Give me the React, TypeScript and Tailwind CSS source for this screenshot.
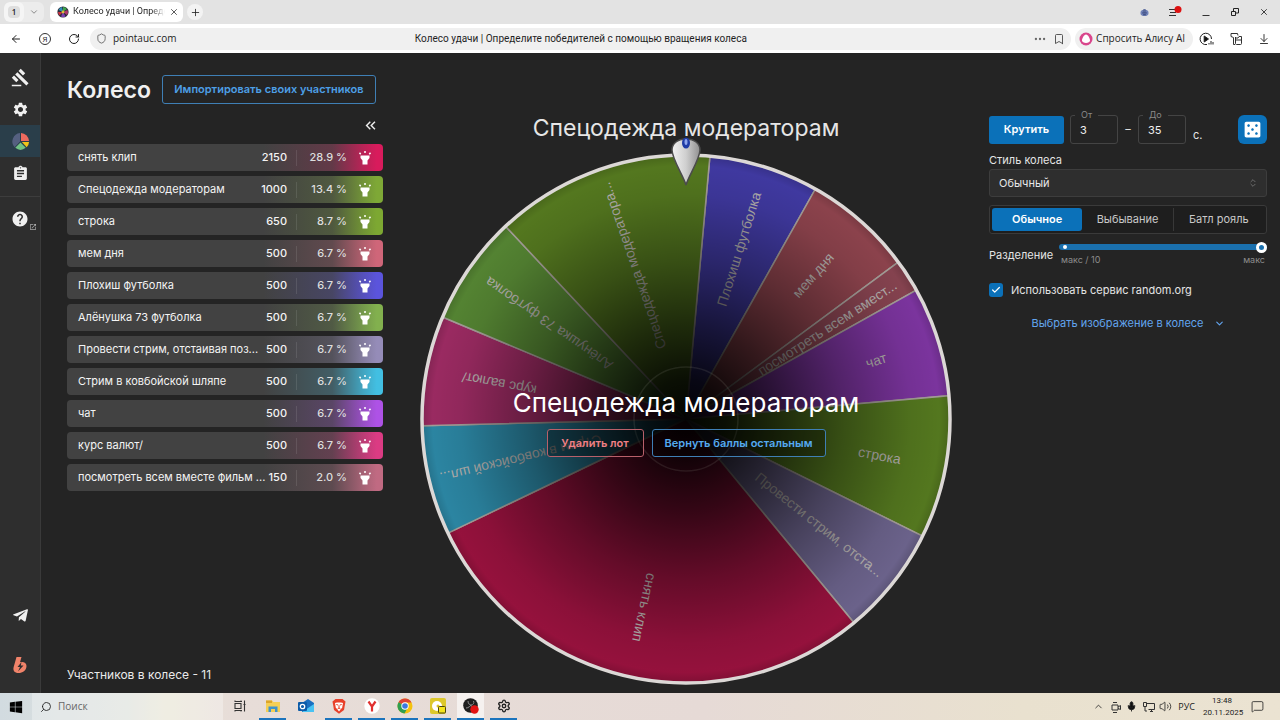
import React, { useState } from "react";
import {
  MdAssignment,
  MdCasino,
  MdGavel,
  MdHelp,
  MdKeyboardDoubleArrowLeft,
  MdOpenInNew,
  MdSettings,
} from "react-icons/md";
import { FaTelegramPlane, FaWindows } from "react-icons/fa";
import {
  ArrowDownToLine,
  ArrowLeft,
  Bookmark,
  Check,
  ChevronDown,
  ChevronsUpDown,
  ChevronUp,
  Ellipsis,
  MessageSquare,
  Mic,
  Plus,
  RotateCw,
  Search,
  Settings,
  Shield,
  Volume2,
  X,
} from "lucide-react";

type Lot = { name: string; points: number; share: string; color: string };

const lots: Lot[] = [
  { name: "снять клип", points: 2150, share: "28.9", color: "#d81b5c" },
  { name: "Спецодежда модераторам", points: 1000, share: "13.4", color: "#7ea836" },
  { name: "строка", points: 650, share: "8.7", color: "#7da832" },
  { name: "мем дня", points: 500, share: "6.7", color: "#cf6679" },
  { name: "Плохиш футболка", points: 500, share: "6.7", color: "#5b54dc" },
  { name: "Алёнушка 73 футболка", points: 500, share: "6.7", color: "#82b04e" },
  { name: "Провести стрим, отстаивая поз...", points: 500, share: "6.7", color: "#958cb8" },
  { name: "Стрим в ковбойской шляпе", points: 500, share: "6.7", color: "#42bfe2" },
  { name: "чат", points: 500, share: "6.7", color: "#ae52e6" },
  { name: "курс валют/", points: 500, share: "6.7", color: "#db3b83" },
  { name: "посмотреть всем вместе фильм ...", points: 150, share: "2.0", color: "#c06a82" },
];

type Slice = { label: string; value: number; color: string; radius: number };

const slices: Slice[] = [
  { label: "Плохиш футболка", value: 500, color: "#423ba6", radius: 178 },
  { label: "мем дня", value: 500, color: "#91454f", radius: 192 },
  { label: "посмотреть всем вмест...", value: 150, color: "#8a4552", radius: 168 },
  { label: "чат", value: 500, color: "#8036a4", radius: 199 },
  { label: "строка", value: 650, color: "#577c20", radius: 197 },
  { label: "Провести стрим, отста...", value: 500, color: "#6f6690", radius: 170 },
  { label: "снять клип", value: 2150, color: "#9b123f", radius: 193 },
  { label: "Стрим в ковбойской шл...", value: 500, color: "#2d8aa8", radius: 170 },
  { label: "курс валют/", value: 500, color: "#a02c65", radius: 190 },
  { label: "Алёнушка 73 футболка", value: 500, color: "#578834", radius: 167 },
  { label: "Спецодежда модератора...", value: 1000, color: "#577c20", radius: 162 },
];

const RADIUS = 264;
const START_ANGLE = 5.2;

function pointAt(angle: number, r: number) {
  const a = (angle * Math.PI) / 180;
  return { x: Math.sin(a) * r, y: -Math.cos(a) * r };
}

function Wheel() {
  const total = slices.reduce((sum, s) => sum + s.value, 0);
  let angle = START_ANGLE;
  const arcs = slices.map((s) => {
    const from = angle;
    angle += (s.value / total) * 360;
    return { ...s, from, to: angle, mid: (from + angle) / 2 };
  });
  return (
    <svg viewBox="-266 -266 532 532" className="block h-auto w-full" role="img" aria-label="Колесо">
      <defs>
        <radialGradient id="shade">
          <stop offset="0" stopColor="#000" stopOpacity="0.97" />
          <stop offset="0.15" stopColor="#000" stopOpacity="0.88" />
          <stop offset="0.35" stopColor="#000" stopOpacity="0.66" />
          <stop offset="0.6" stopColor="#000" stopOpacity="0.36" />
          <stop offset="0.85" stopColor="#000" stopOpacity="0.1" />
          <stop offset="0.96" stopColor="#000" stopOpacity="0.04" />
          <stop offset="1" stopColor="#000" stopOpacity="0.18" />
        </radialGradient>
      </defs>
      {arcs.map((s) => {
        const a = pointAt(s.from, RADIUS);
        const b = pointAt(s.to, RADIUS);
        const large = s.to - s.from > 180 ? 1 : 0;
        return (
          <path
            key={s.label}
            d={`M0 0L${a.x} ${a.y}A${RADIUS} ${RADIUS} 0 ${large} 1 ${b.x} ${b.y}Z`}
            fill={s.color}
            stroke="#a9a29c"
            strokeWidth="1.5"
          />
        );
      })}
      {arcs.map((s) => {
        const p = pointAt(s.mid, s.radius);
        return (
          <text
            key={s.label}
            transform={`translate(${p.x} ${p.y}) rotate(${s.mid - 90})`}
            textAnchor="middle"
            dominantBaseline="central"
            fontSize="14"
            fill="#b9b5b2"
            className="font-['Liberation_Sans',sans-serif]"
          >
            {s.label}
          </text>
        );
      })}
      <circle r={RADIUS} fill="url(#shade)" />
      <circle r="52" fill="none" stroke="#9a9a90" strokeOpacity="0.15" strokeWidth="1.5" />
      <circle r="264" fill="none" stroke="#dcd8d6" strokeWidth="3.5" />
    </svg>
  );
}

function Pointer() {
  return (
    <svg viewBox="0 0 34 52" className="absolute -top-[17px] left-1/2 h-[52px] w-[34px] -translate-x-1/2" aria-hidden="true">
      <defs>
        <linearGradient id="metal" x1="0" x2="1">
          <stop offset="0" stopColor="#f2f2f2" />
          <stop offset="0.5" stopColor="#cfcfcf" />
          <stop offset="1" stopColor="#909090" />
        </linearGradient>
      </defs>
      <path
        d="M17 49C15 41 3 23 3 14C3 8 8 3 17 3S31 8 31 14C31 23 19 41 17 49Z"
        fill="url(#metal)"
        stroke="#4b4b4b"
        strokeWidth="1.5"
      />
      <ellipse cx="17" cy="7" rx="4" ry="5.5" fill="#1f3ca6" />
      <ellipse cx="17" cy="6" rx="1.5" ry="3" fill="#8fa6ee" />
    </svg>
  );
}

function BrowserChrome() {
  return (
    <header className="font-['Open_Sans',sans-serif] text-[10px] text-[#1f1f1f]">
      <div className="flex h-6 items-center bg-[#e3e3e3] pl-1 pr-[11px]">
        <div className="flex h-5 w-10 items-center overflow-hidden rounded-md bg-[#ececec]">
          <span className="flex h-5 w-5 items-center justify-center rounded-md bg-[#f5f5f5]">
            <span className="flex h-3 w-3 items-center justify-center rounded bg-[#dedede] text-[8px] font-semibold">1</span>
          </span>
          <button aria-label="Список вкладок" className="flex h-5 w-5 items-center justify-center text-[#777]">
            <ChevronDown size={10} />
          </button>
        </div>
        <div className="ml-1.5 flex h-5 w-[133px] items-center rounded-md bg-white pl-[7px] pr-1">
          <svg viewBox="0 0 12 12" className="h-3 w-3 shrink-0" aria-hidden="true">
            <circle cx="6" cy="6" r="5.6" fill="#2b2b3a" />
            <path d="M6 6V1A5 5 0 0 1 10 3Z" fill="#3fa54b" />
            <path d="M6 6L10.5 4A5 5 0 0 1 10 9Z" fill="#b0366b" />
            <path d="M6 6L8.5 10.4A5 5 0 0 1 4 10.5Z" fill="#7c3fb5" />
            <path d="M6 6L2.4 9.4A5 5 0 0 1 1 6Z" fill="#c8323f" />
            <path d="M6 6L1.6 4A5 5 0 0 1 5 1Z" fill="#2f8fb8" />
            <circle cx="6" cy="6" r="1.4" fill="#d8c43a" />
          </svg>
          <span className="ml-1 w-[92px] overflow-hidden whitespace-nowrap font-['Roboto',sans-serif] text-[9px] [mask-image:linear-gradient(to_right,black_85%,transparent)]">
            Колесо удачи | Опреде
          </span>
          <button aria-label="Закрыть вкладку" className="ml-auto">
            <X size={10} strokeWidth={1.75} />
          </button>
        </div>
        <button aria-label="Новая вкладка" className="ml-1 flex h-4 w-4 items-center justify-center rounded-full bg-[#f3f3f3]">
          <Plus size={11} strokeWidth={1.75} />
        </button>
        <div className="ml-auto flex items-center gap-[19px]">
          <svg viewBox="0 0 10 10" className="h-[9px] w-[9px]" aria-hidden="true">
            <ellipse cx="5" cy="5.5" rx="4.5" ry="3.5" fill="#7183b8" />
            <circle cx="5" cy="3" r="2" fill="#5a6a9c" />
            <path d="M2.5 5.5h5M3.5 7.5h3" stroke="#2e3c70" />
          </svg>
          <button aria-label="Меню" className="h-3 w-3.5">
            <svg viewBox="0 0 14 12" className="h-3 w-3.5">
              <path d="M1 3.5h7M2 6.5h6M1 9.5h7" stroke="#333" />
              <circle cx="10" cy="3.5" r="3.5" fill="#dd1111" />
            </svg>
          </button>
          <button aria-label="Свернуть" className="h-2.5 w-2.5">
            <svg viewBox="0 0 10 10" className="h-2.5 w-2.5">
              <path d="M1.5 8.5h7" stroke="#333" />
            </svg>
          </button>
          <button aria-label="Развернуть" className="h-2.5 w-2.5">
            <svg viewBox="0 0 10 10" className="h-2.5 w-2.5" fill="none" stroke="#222">
              <path d="M1.5 4.5h4v4h-4zM3.5 4V1.5h5v4.500H6" />
            </svg>
          </button>
          <button aria-label="Закрыть" className="h-2.5 w-2.5">
            <X size={10} strokeWidth={2} />
          </button>
        </div>
      </div>
      <div className="flex h-[29px] items-center bg-white px-2.5">
        <button aria-label="Назад">
          <ArrowLeft size={12} strokeWidth={2} />
        </button>
        <button aria-label="Яндекс" className="ml-[17px] flex h-3 w-3 items-center justify-center rounded-full border border-[#333] text-[8px] leading-none">
          Я
        </button>
        <button aria-label="Обновить" className="ml-[17px]">
          <RotateCw size={12} strokeWidth={2} />
        </button>
        <div className="ml-2.5 flex h-[22px] min-w-0 flex-1 items-center rounded-full bg-[#f0f0f0] px-1.5">
          <Shield size={11} strokeWidth={1.75} className="text-[#555]" />
          <span className="ml-1.5">pointauc.com</span>
          <span className="min-w-0 flex-1 truncate pr-12 text-center font-['Roboto',sans-serif]">
            Колесо удачи | Определите победителей с помощью вращения колеса
          </span>
          <Ellipsis size={14} className="text-[#666]" />
          <Bookmark size={12} strokeWidth={1.75} className="ml-1.5 text-[#444]" />
        </div>
        <button className="ml-1 flex h-[22px] items-center gap-[3px] rounded-full bg-[#f0f0f0] pl-1 pr-2">
          <svg viewBox="0 0 14 14" className="h-3.5 w-3.5" aria-hidden="true">
            <circle cx="7" cy="7" r="6.500" fill="#d9468c" />
            <path d="M7 2.500C9 2.500 11 6.500 11 8.300C11 10.300 9 11 7 11S3 10.300 3 8.300C3 6.500 5 2.500 7 2.500Z" fill="#fff" />
          </svg>
          Спросить Алису AI
        </button>
        <div className="ml-1.5 flex items-center gap-[15px]">
          <svg viewBox="0 0 15 14" className="h-3.5 w-[15px]" fill="none" stroke="#222" aria-hidden="true">
            <path d="M8 12.500A5.700 5.700 0 1 1 12.500 7" />
            <path d="M5.200 4v6L9.500 7Z" fill="#111" />
            <path d="M10 12.500V11M12 12.500V9M14 12.500V10" />
          </svg>
          <svg viewBox="0 0 14 14" className="h-3.5 w-3.5" fill="none" stroke="#333" aria-hidden="true">
            <path d="M4.500 5.500L2 4.500V1.500H8.500L9 3.500M4.500 5.500V12.500H6" />
            <path d="M6.500 5V11.500Q6.500 12.500 7.500 12.500H11.500Q12.500 12.500 12.500 11.500V4.500H10L9 6H6.500M6.500 8H12.500" />
          </svg>
          <ArrowDownToLine size={12} strokeWidth={1.75} />
        </div>
      </div>
    </header>
  );
}

function Sidebar() {
  const item = "flex h-8 items-center justify-center";
  return (
    <nav className="flex w-[41px] shrink-0 flex-col border-r border-[#3a3a3a] bg-[#2e2e2e] pt-2 text-[#f0f0f0]">
      <a href="#auction" aria-label="Аукцион" className={item}>
        <MdGavel size={19} />
      </a>
      <a href="#settings" aria-label="Настройки" className={item}>
        <MdSettings size={17} />
      </a>
      <a href="#wheel" aria-label="Колесо" aria-current="page" className="flex h-8 items-center justify-center bg-[#2a3e4a]">
        <svg viewBox="0 0 20 20" className="h-[19px] w-[19px]">
          <path d="M10.500 9.500V1A8.800 8.800 0 0 1 19 9.500Z" fill="#ed6a5e" />
          <path d="M11.500 10.500H19A8.800 8.800 0 0 1 16.500 16Z" fill="#f0c419" />
          <path d="M10 11L15.500 16.700A9 9 0 0 1 4.500 16.700Z" fill="#71c285" />
          <path d="M9.500 1V10L3.800 16A9 9 0 0 1 9.500 1Z" fill="#556080" />
        </svg>
      </a>
      <a href="#history" aria-label="История" className={item}>
        <MdAssignment size={17} />
      </a>
      <div className="mb-1.5 mt-[7px] border-t border-[#3d3d3d]" />
      <a href="#help" aria-label="Помощь" className="relative flex h-8 items-center justify-center">
        <MdHelp size={18} />
        <MdOpenInNew size={8} className="absolute bottom-1 right-[3px] text-[#aaa]" />
      </a>
      <div className="mt-auto flex flex-col gap-[18px] pb-3">
        <a href="#telegram" aria-label="Telegram" className={item}>
          <FaTelegramPlane size={17} />
        </a>
        <a href="#boosty" aria-label="Boosty" className={item}>
          <svg viewBox="0 0 16 18" className="h-[18px] w-4">
            <path
              d="M4.500 1H9.500L8 6.300C11 5.300 14.500 6.500 14.500 10C14.500 14.500 10.500 17 6.500 17C2.500 17 .8 14.500 1.600 11.200Z"
              fill="#f0836a"
            />
            <path d="M9.500 6L5.500 11H8L6 15.500L11.500 9.500H8.800Z" fill="#2e2e2e" />
          </svg>
        </a>
      </div>
    </nav>
  );
}

function TorchIcon() {
  return (
    <svg viewBox="0 0 16 16" className="h-4 w-4" aria-hidden="true">
      <path d="M3.500 5.500H12.500V8L10.500 10.500V14.500H5.500V10.500L3.500 8Z" fill="currentColor" />
      <path d="M8 1V3M2.500 2.800L3.700 4.200M13.500 2.800L12.300 4.200" stroke="currentColor" strokeWidth="1.500" />
    </svg>
  );
}

function LotRow({ lot }: { lot: Lot }) {
  const glow = `linear-gradient(to right, transparent 62%, color-mix(in srgb, ${lot.color} 22%, transparent) 84%, color-mix(in srgb, ${lot.color} 75%, transparent) 93%, ${lot.color} 98%)`;
  return (
    <li
      className="flex h-[27px] items-center rounded bg-[#424242] pl-[11px] text-[11px] text-[#f4f4f4]"
      style={{ backgroundImage: glow }}
    >
      <span className="min-w-0 flex-1 whitespace-nowrap">{lot.name}</span>
      <span className="pr-[9px] text-right font-medium">{lot.points}</span>
      <span className="h-4 border-l border-white/10" />
      <span className="w-[50px] text-right font-medium text-[#dedede]">{lot.share} %</span>
      <button aria-label={`Подсветить ${lot.name}`} className="flex w-9 items-center justify-center text-white">
        <TorchIcon />
      </button>
    </li>
  );
}

function LotPanel() {
  return (
    <section className="flex w-[316px] shrink-0 flex-col pb-2.5 pt-[22px]">
      <div className="flex items-center">
        <h1 className="text-[23px] font-semibold leading-7 text-[#f0f0f0]">Колесо</h1>
        <button className="ml-[11px] h-[29px] w-[214px] whitespace-nowrap rounded-[3px] border border-[#3f7fb5] text-[11px] font-semibold text-[#4d9fe6]">
          Импортировать своих участников
        </button>
      </div>
      <button aria-label="Свернуть список" className="mr-1 mt-[13px] self-end text-[#eee]">
        <MdKeyboardDoubleArrowLeft size={17} />
      </button>
      <ul className="mt-[10px] flex flex-col gap-[5px]">
        {lots.map((lot) => (
          <LotRow key={lot.name} lot={lot} />
        ))}
      </ul>
      <p className="mt-auto text-xs leading-4 text-[#eaeaea]">Участников в колесе - 11</p>
    </section>
  );
}

function WheelStage() {
  return (
    <section className="flex min-w-0 flex-1 flex-col items-center pt-[59px]">
      <h2 className="text-[23px] leading-8 text-[#e6e6e6]">Спецодежда модераторам</h2>
      <div className="relative mt-[9px] w-[532px] max-w-full">
        <Wheel />
        <Pointer />
        <div className="absolute inset-0 flex flex-col items-center justify-center gap-2 pt-1">
          <p className="text-[26px] leading-9 text-white">Спецодежда модераторам</p>
          <div className="flex gap-2 text-[11px] font-semibold">
            <button className="h-7 w-[97px] rounded-[3px] border border-[#b8606a] bg-black/30 text-[#f08085]">Удалить лот</button>
            <button className="h-7 w-[174px] rounded-[3px] border border-[#3f7fb5] bg-black/30 text-[#55aaf0]">
              Вернуть баллы остальным
            </button>
          </div>
        </div>
      </div>
    </section>
  );
}

function TimeField({ id, label, value }: { id: string; label: string; value: string }) {
  return (
    <div className="relative">
      <label htmlFor={id} className="absolute -top-[5px] left-[5px] bg-[#242424] px-1.5 text-[9px] leading-[10px] text-[#8a8a8a]">
        {label}
      </label>
      <input
        id={id}
        defaultValue={value}
        className="block h-[29px] w-12 rounded-[3px] border border-[#444] bg-transparent px-[9px] text-[11px] text-[#f0f0f0] outline-none"
      />
    </div>
  );
}

function SettingsPanel() {
  const modes = ["Обычное", "Выбывание", "Батл рояль"];
  const [mode, setMode] = useState(modes[0]);
  return (
    <section className="flex w-[278px] shrink-0 flex-col pt-[62px] text-[11px] text-[#e4e4e4]">
      <div className="flex items-center">
        <button className="h-7 w-[75px] rounded-[3px] bg-[#0b71b9] font-semibold text-white">Крутить</button>
        <div className="ml-1.5">
          <TimeField id="from" label="От" value="3" />
        </div>
        <span className="w-5 text-center">–</span>
        <TimeField id="to" label="До" value="35" />
        <span className="ml-[7px] mt-3">с.</span>
        <button aria-label="Случайное время" className="ml-auto flex h-[29px] w-[29px] items-center justify-center rounded-md bg-[#0b71b9] text-white">
          <MdCasino size={21} />
        </button>
      </div>
      <label htmlFor="style" className="mt-2 leading-4">
        Стиль колеса
      </label>
      <div className="relative mt-px">
        <select
          id="style"
          className="block h-7 w-full appearance-none rounded-[3px] border border-[#3d3d3d] bg-[#2e2e2e] px-[9px] text-[11px] text-[#e8e8e8] outline-none"
        >
          <option>Обычный</option>
        </select>
        <ChevronsUpDown size={10} strokeWidth={2} className="pointer-events-none absolute right-[9px] top-[9px] text-[#777]" />
      </div>
      <div role="radiogroup" aria-label="Режим" className="mt-2 flex rounded-[3px] border border-[#3a3a3a] bg-[#1e1e1e] p-[2px]">
        {modes.map((m, i) => (
          <label
            key={m}
            className={
              mode === m
                ? "flex h-[23px] flex-1 items-center justify-center rounded-[3px] bg-[#0b71b9] font-semibold text-white"
                : i === 2
                  ? "flex h-[23px] flex-1 items-center justify-center border-l border-[#383838] text-[#c9c9c9]"
                  : "flex h-[23px] flex-1 items-center justify-center text-[#c9c9c9]"
            }
          >
            <input type="radio" name="mode" className="sr-only" checked={mode === m} onChange={() => setMode(m)} />
            {m}
          </label>
        ))}
      </div>
      <div className="mt-[10px] flex items-center">
        <label htmlFor="split" className="w-[70px]">
          Разделение
        </label>
        <div className="relative min-w-0 flex-1">
          <input
            id="split"
            type="range"
            min={1}
            max={10}
            defaultValue={10}
            className="block h-1.5 w-full appearance-none rounded-full bg-[#1a70ae] [&::-webkit-slider-thumb]:h-[11px] [&::-webkit-slider-thumb]:w-[11px] [&::-webkit-slider-thumb]:appearance-none [&::-webkit-slider-thumb]:rounded-full [&::-webkit-slider-thumb]:border-[3px] [&::-webkit-slider-thumb]:border-white [&::-webkit-slider-thumb]:bg-[#1a70ae]"
          />
          <span className="absolute left-[4px] top-[1px] h-1 w-1 rounded-full bg-white" />
          <div className="mt-1 flex justify-between px-[2px] text-[9px] leading-3 text-[#8c8c8c]">
            <span>макс / 10</span>
            <span>макс</span>
          </div>
        </div>
      </div>
      <div className="mt-4 flex items-center">
        <span className="relative flex h-3.5 w-3.5">
          <input
            id="random-org"
            type="checkbox"
            defaultChecked
            className="h-3.5 w-3.5 appearance-none rounded-[3px] bg-[#0b71b9]"
          />
          <Check size={10} strokeWidth={3} className="pointer-events-none absolute left-0.5 top-0.5 text-white" />
        </span>
        <label htmlFor="random-org" className="ml-2 leading-4">
          Использовать сервис random.org
        </label>
      </div>
      <button className="mt-[17px] flex items-center gap-2.5 self-center leading-4 text-[#62a4ee]">
        Выбрать изображение в колесе
        <ChevronDown size={11} strokeWidth={2.5} />
      </button>
    </section>
  );
}

function TaskApp({ label, state, children }: { label: string; state: "idle" | "open" | "active"; children: React.ReactNode }) {
  const tone =
    state === "active"
      ? "border-[#1b74bd] bg-white/60"
      : state === "open"
        ? "border-[#1b74bd]"
        : "border-transparent";
  return (
    <button aria-label={label} className="flex h-[27px] w-[33px] items-center justify-center px-[3px]">
      <span className={`flex h-[27px] w-full items-center justify-center border-b-2 ${tone}`}>
        <svg viewBox="0 0 16 16" className="h-4 w-4">
          {children}
        </svg>
      </span>
    </button>
  );
}

function Taskbar() {
  return (
    <footer className="flex h-[27px] items-center bg-[linear-gradient(to_right,#d2dbe0,#dfe2dd_10%,#e9e6d6_13%,#e7ddd8_18%,#e6dad6_55%,#e9e1cf_80%,#ebe3d2)] font-['Open_Sans',sans-serif] text-[#222]">
      <button aria-label="Пуск" className="flex h-full w-8 items-center justify-center">
        <FaWindows size={14} className="text-black" />
      </button>
      <label htmlFor="search" className="flex h-full w-[191px] items-center bg-white/30 pl-2">
        <Search size={12} strokeWidth={1.75} className="-scale-x-100" />
        <input
          id="search"
          aria-label="Поиск"
          placeholder="Поиск"
          className="ml-1.5 w-28 bg-transparent text-[10px] outline-none placeholder:text-[#666]"
        />
      </label>
      <div className="flex">
        <TaskApp label="Представление задач" state="idle">
          <path d="M3 3.500v-1M9 3.500v-1M3 12.500v1M9 12.500v1M2.500 3.500h7.500M2.500 12.500h7.500M3 5.500h6v5H3zM12.500 2.500v11M11.500 6.500h2" fill="none" stroke="#333" strokeWidth="1.100" />
        </TaskApp>
        <TaskApp label="Проводник" state="open">
          <path d="M1 2.500h6l1.500 1.500H15V14H1Z" fill="#f5cf55" />
          <path d="M1 2.500h6v2.500H1z" fill="#dca52a" />
          <path d="M3.500 14V8.500h9V14H10v-3H6v3Z" fill="#3f93cc" />
        </TaskApp>
        <TaskApp label="Outlook" state="idle">
          <path d="M4 5L10 1L16 5V14H4Z" fill="#1a6fc0" />
          <path d="M4 14L16 6V14Z" fill="#48c2f2" />
          <rect y="4" width="9" height="9" rx="1" fill="#0b5ba8" />
          <circle cx="4.500" cy="8.500" r="2.200" fill="none" stroke="#fff" strokeWidth="1.300" />
        </TaskApp>
        <TaskApp label="Brave" state="open">
          <path d="M4.500 1h7L14.500 3.500L13 12L8 15.800L3 12L1.500 3.500Z" fill="#e8402a" />
          <path d="M4 5l2-.5h4l2 .5-.8 4.500L8 13.500 4.800 9.500Z" fill="#fff" />
          <path d="M5.300 6.500l2 .6M10.700 6.500l-2 .6M8 7.500v2.500M6.500 11L8 10l1.500 1" stroke="#e8402a" fill="none" />
        </TaskApp>
        <TaskApp label="Яндекс Браузер" state="open">
          <circle cx="8" cy="8" r="7.700" fill="#fff" />
          <path d="M4.500 3.500L8 8.500V13.500M8 8.500L11.500 3.500" stroke="#e0302f" strokeWidth="2.200" fill="none" />
        </TaskApp>
        <TaskApp label="Chrome" state="open">
          <circle cx="8" cy="8" r="7.500" fill="#f4c20d" />
          <path d="M8 8L1.500 4.200A7.500 7.500 0 0 1 14.500 4.500H8Z" fill="#dd4436" />
          <path d="M8 8L1.500 4.200A7.500 7.500 0 0 0 7.500 15.500L10.500 10Z" fill="#2f9e50" />
          <circle cx="8" cy="8" r="3.700" fill="#fff" />
          <circle cx="8" cy="8" r="2.800" fill="#3b79e0" />
        </TaskApp>
        <TaskApp label="Яндекс Музыка" state="open">
          <rect width="16" height="16" rx="2" fill="#ddc82c" />
          <circle cx="7" cy="8" r="5" fill="#fff" />
          <circle cx="8" cy="8" r="1.500" fill="#ddc82c" />
          <rect x="8.500" y="8.500" width="7" height="6.500" rx="1" fill="#f5e51e" stroke="#4a4310" />
        </TaskApp>
        <TaskApp label="OBS Studio" state="active">
          <circle cx="7.500" cy="7.500" r="7.300" fill="#1f1f1f" />
          <path d="M5 3C5 6 7 7 8 7C10 7 11.500 5 10.500 3M8 7C6.500 8 6 10 3 10M8 7C8 9 10 11 8.500 13" stroke="#8a8a8a" fill="none" />
          <circle cx="11.500" cy="11.500" r="4.200" fill="#e31313" />
        </TaskApp>
        <button aria-label="Параметры" className="flex h-[27px] w-[33px] items-center justify-center px-[3px]">
          <span className="flex h-[27px] w-full items-center justify-center border-b-2 border-[#1b74bd]">
            <Settings size={14} strokeWidth={2.25} />
          </span>
        </button>
      </div>
      <div className="ml-auto flex items-center pr-4">
        <ChevronUp size={11} strokeWidth={1.75} />
        <svg viewBox="0 0 12 12" className="ml-1.5 h-3 w-3" fill="none" stroke="#333" aria-hidden="true">
          <path d="M2 4h6v5H2zM8 6l2.500-1.500v4L8 7.500M3 1.500h4M3 11.500h4" />
        </svg>
        <Mic size={11} strokeWidth={2} fill="#111" className="ml-1" />
        <svg viewBox="0 0 12 12" className="ml-1.5 h-3 w-3" fill="none" stroke="#333" aria-hidden="true">
          <path d="M3.500 2.500H11.500V8.500H5.500M7 10.500h3M8.500 8.500v2M.5 1.500h3v4h-3zM2 5.500V10h2" />
        </svg>
        <Volume2 size={13} strokeWidth={1.500} className="ml-1" />
        <span className="ml-1.5 text-[9px]">РУС</span>
        <div className="ml-2 w-[38px] whitespace-nowrap text-center font-['Roboto',sans-serif] text-[8px] leading-3">
          <div>13:48</div>
          <div>20.11.2025</div>
        </div>
        <MessageSquare size={13} strokeWidth={1.500} className="ml-2.5" />
      </div>
    </footer>
  );
}

export default function App() {
  return (
    <div className="flex min-h-screen flex-col bg-[#242424] font-['Inter',sans-serif]">
      <BrowserChrome />
      <div className="flex flex-1">
        <Sidebar />
        <main className="flex min-w-0 flex-1 pl-[26px] pr-[13px]">
          <LotPanel />
          <WheelStage />
          <SettingsPanel />
        </main>
      </div>
      <Taskbar />
    </div>
  );
}
